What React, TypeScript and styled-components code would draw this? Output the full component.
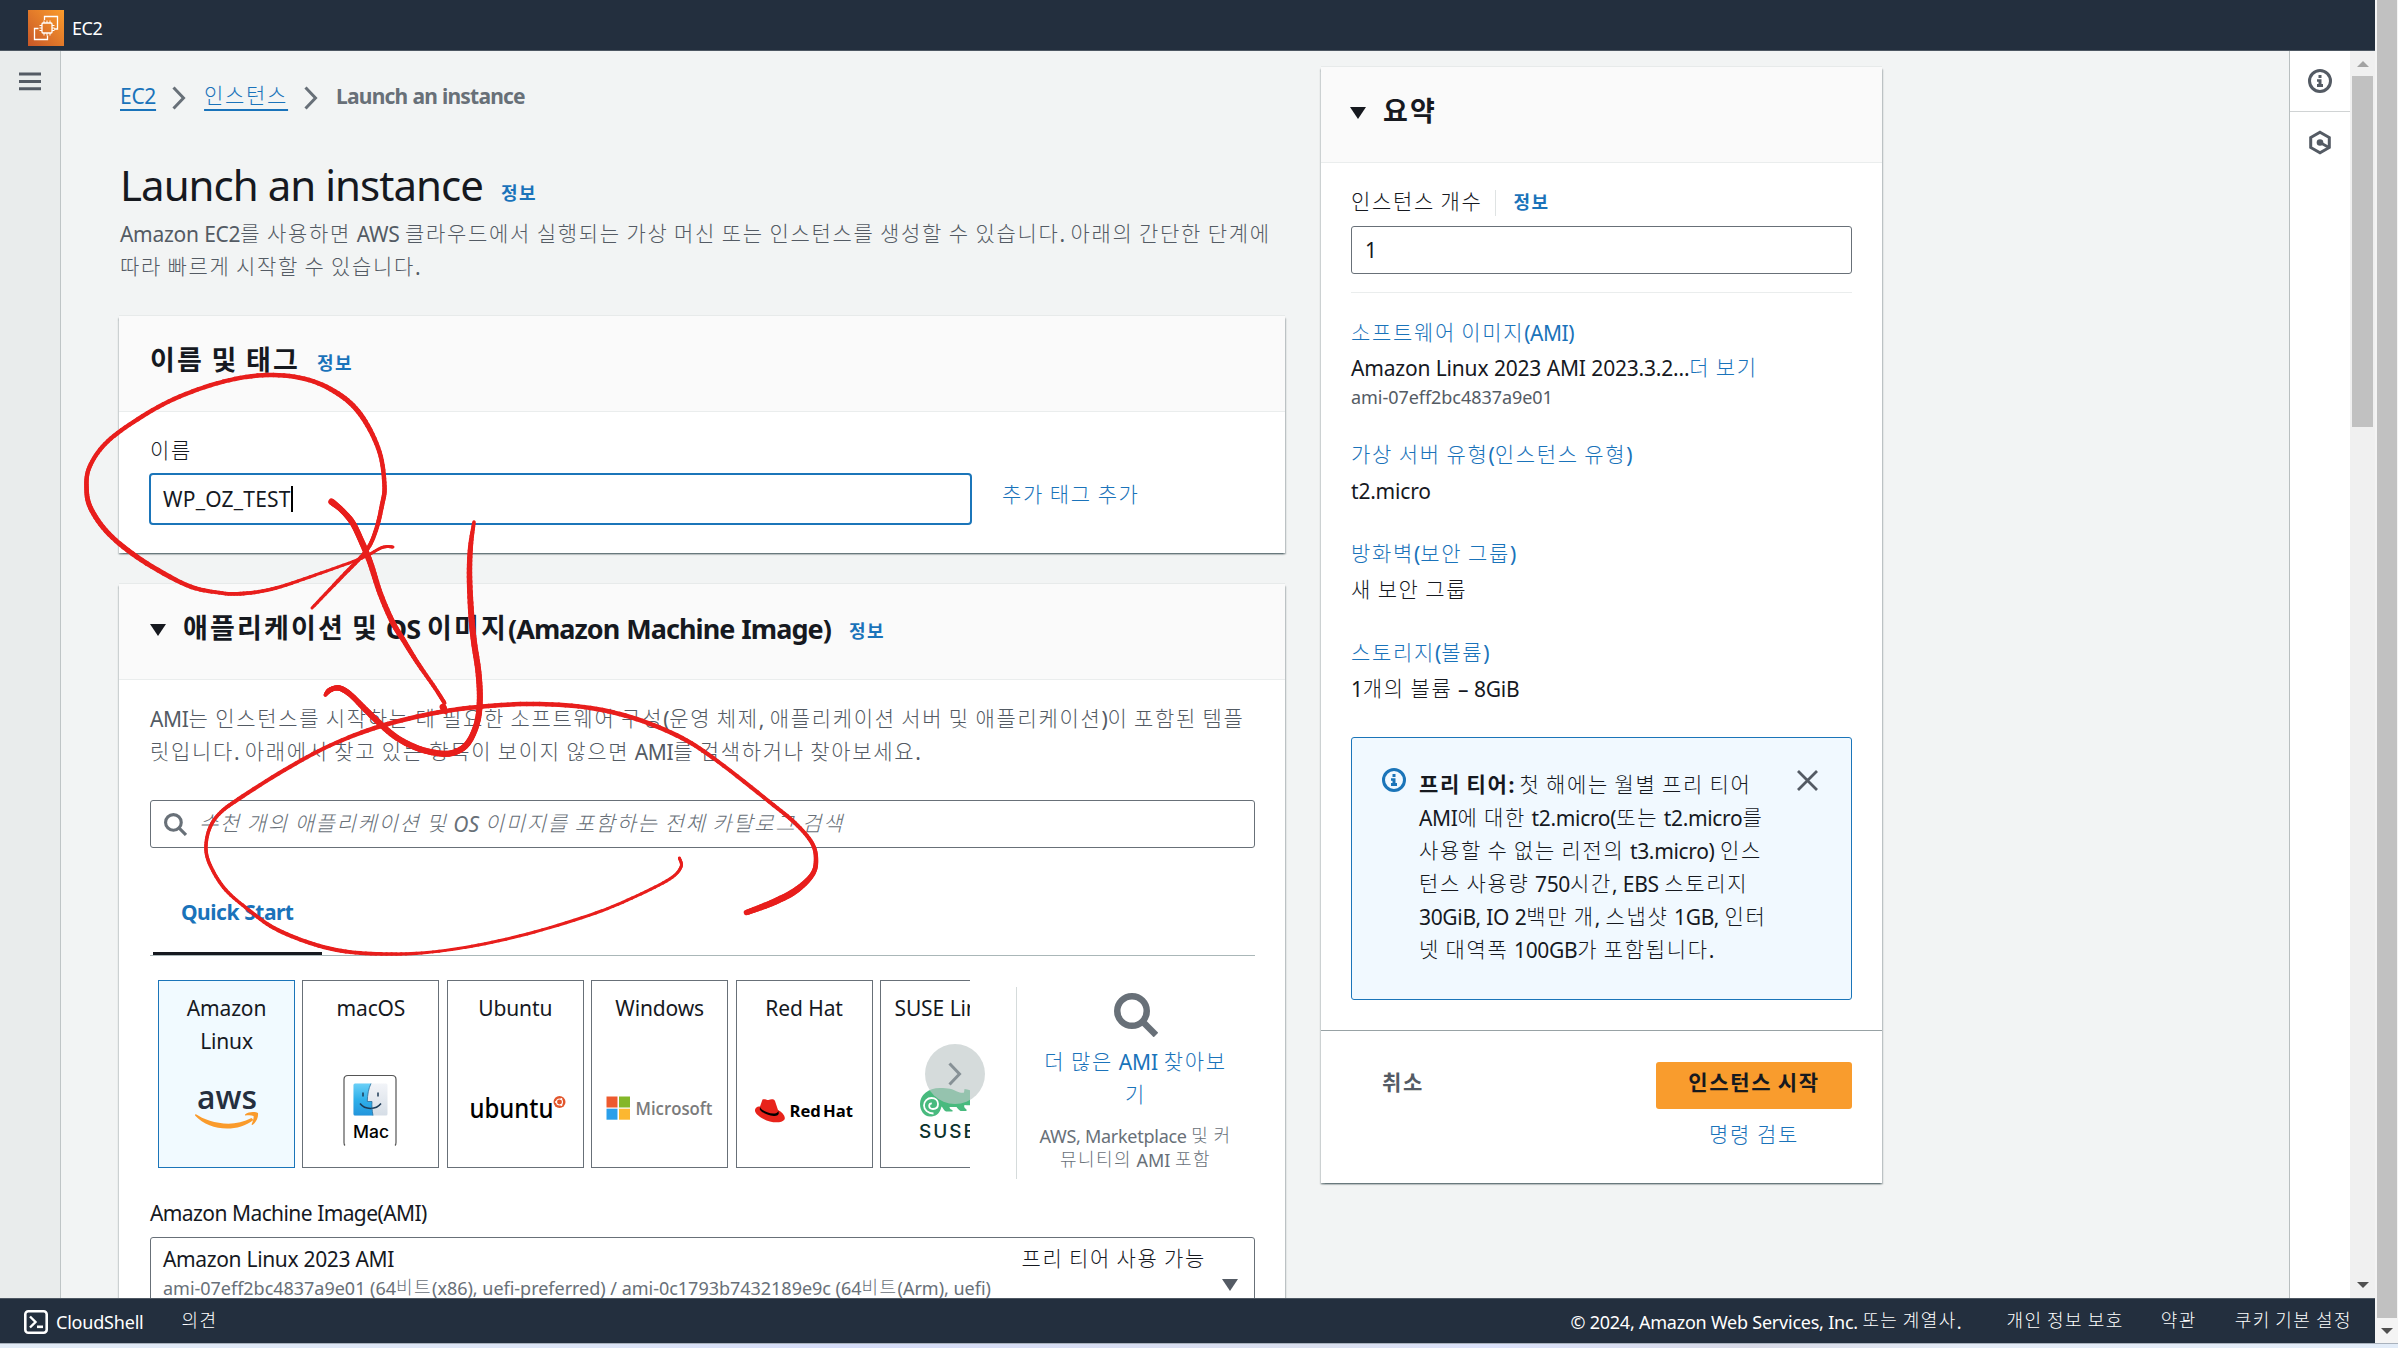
import React from 'react';
import styled, { createGlobalStyle, css } from 'styled-components';

const c = {
  ink: '#16191f',
  link: '#1a73ba',
  body: '#545b64',
  muted: '#687078',
  navy: '#232f3e',
  line: '#eaeded',
  page: '#f2f4f4',
  red: '#e81e1c',
};

const Global = createGlobalStyle`
  * { box-sizing: border-box; }
  body { margin: 0; overflow: hidden; background: ${c.page}; }
  body, input, button { font-family: 'Noto Sans', 'Noto Sans CJK KR', sans-serif; }
  svg { display: block; flex: none; }
`;

/* ---------- text ---------- */

const Hangul = styled.span<{ $bold?: boolean }>`
  font-family: 'Noto Sans CJK KR', sans-serif;
  font-weight: ${(p) => (p.$bold ? 700 : 300)};
  letter-spacing: 0.08em;
  line-height: 0;
  vertical-align: 1px;
`;

const Mixed = ({ children, bold }: { children: string; bold?: boolean }) => (
  <>
    {children.split(/([\uAC00-\uD7A3]+)/).map((run, i) =>
      i % 2 ? (
        <Hangul key={i} $bold={bold}>
          {run}
        </Hangul>
      ) : (
        run
      ),
    )}
  </>
);

type TextProps = { $color?: string; $size?: number; $lh?: number; $ls?: number; $ws?: number; $bold?: boolean; $mt?: number };

const textStyle = css<TextProps>`
  color: ${(p) => p.$color ?? c.ink};
  font-size: ${(p) => p.$size ?? 21}px;
  line-height: ${(p) => p.$lh ?? 33}px;
  letter-spacing: ${(p) => p.$ls ?? ((p.$size ?? 21) < 21 ? -0.05 : -0.33)}px;
  word-spacing: ${(p) => p.$ws ?? ((p.$size ?? 21) === 21 ? 0.35 : 0)}px;
  font-weight: ${(p) => (p.$bold ? 700 : 400)};
  margin: ${(p) => p.$mt ?? 0}px 0 0;
  white-space: nowrap;
`;
const Line = styled.div<TextProps>`${textStyle}`;
const Text = styled.span<TextProps>`${textStyle}`;

const InfoLink = styled.a<{ $gap?: number }>`
  color: ${c.link};
  font-size: 18px;
  line-height: 24px;
  margin-left: ${(p) => p.$gap ?? 18}px;
  white-space: nowrap;
`;
const Info = ({ gap }: { gap?: number }) => (
  <InfoLink $gap={gap}>
    <Mixed bold>정보</Mixed>
  </InfoLink>
);

/* ---------- shell ---------- */

const Screen = styled.div`
  width: 2398px;
  height: 1348px;
  display: grid;
  grid-template: 1343px 5px / 2375px 23px;
  position: relative;
  overflow: hidden;
`;
const Console = styled.div`
  display: flex;
  flex-direction: column;
  min-width: 0;
  min-height: 0;
`;
const TopBar = styled.header`
  flex: none;
  height: 51px;
  padding: 0 0 0 28px;
  display: flex;
  align-items: center;
  gap: 8px;
  background: ${c.navy};
  border-bottom: 1px solid #4d5762;
`;
const Service = styled.div`
  display: flex;
  gap: 8px;
  align-items: center;
  padding-top: 5px;
`;
const Body = styled.div`
  flex: 1;
  display: flex;
  min-height: 0;
`;
const LeftRail = styled.nav`
  width: 61px;
  flex: none;
  padding: 21px 0 0 19px;
  background: #e9ecec;
  border-right: 1px solid #bfc5c6;
`;
const Content = styled.main`
  flex: 1;
  min-width: 0;
  display: flex;
  align-items: flex-start;
  gap: 36px;
  padding-left: 58px;
  overflow: hidden;
`;
const RightRail = styled.nav`
  width: 61px;
  flex: none;
  background: #fff;
  border-left: 1px solid #b9bfc0;
`;
const RailItem = styled.div<{ $line?: boolean }>`
  height: 61px;
  display: flex;
  align-items: center;
  justify-content: center;
  border-bottom: ${(p) => (p.$line ? '1px solid #d0d3d4' : 'none')};
`;
const InnerScroll = styled.div`
  width: 25px;
  flex: none;
  background: #f0f0f0;
  display: flex;
  flex-direction: column;
  align-items: center;
  padding: 10px 0;
`;
const InnerThumb = styled.div`
  width: 21px;
  height: 351px;
  margin-top: 9px;
  margin-bottom: auto;
  background: #c1c1c1;
`;
const Arrow = styled.i<{ $up?: boolean; $color: string }>`
  width: 0;
  height: 0;
  border: 6px solid transparent;
  border-width: ${(p) => (p.$up ? '0 6px 6px' : '6px 6px 0')};
  border-${(p) => (p.$up ? 'bottom' : 'top')}-color: ${(p) => p.$color};
`;
const OuterScroll = styled.div`
  background: #f4f4f4;
  padding-left: 2px;
`;
const OuterThumb = styled.div`
  width: 20px;
  height: 1318px;
  background: #c1c1c1;
`;
const OuterEnd = styled.div`
  width: 20px;
  display: flex;
  justify-content: center;
  padding-top: 10px;
`;
const Taskbar = styled.div`
  grid-column: 1 / 3;
  border-top: 1px solid #a9b2bd;
  background: linear-gradient(90deg, #e2ebf6, #dce4f6 25%, #d5dcf8 35%, #dadfee 55%, #dbe2fb 62%, #d7d9e6 73%, #e4ebf6 82%, #e2ecf8);
`;

/* ---------- page head ---------- */

const Column = styled.div`
  width: 1166px;
  flex: none;
  padding-top: 29px;
`;
const Crumbs = styled.div`
  display: flex;
  align-items: center;
  height: 33px;
  padding-left: 1px;
`;
const Crumb = styled.a<{ $ls?: number }>`
  color: ${c.link};
  font-size: 21px;
  line-height: 33px;
  letter-spacing: ${(p) => p.$ls ?? 0}px;
  text-decoration: underline 2px;
  text-underline-offset: 5px;
`;
const Sep = styled.span`
  display: flex;
  padding: 3px 18px 0 16px;
`;
const TitleRow = styled.div`
  display: flex;
  align-items: baseline;
  padding-left: 1px;
  margin-top: 45px;
`;
const Intro = styled.div`
  padding-left: 1px;
  margin: 6px 0 32px;
`;

/* ---------- cards ---------- */

const Card = styled.section<{ $h?: number; $mt?: number }>`
  background: #fff;
  height: ${(p) => (p.$h ? `${p.$h}px` : 'auto')};
  margin-top: ${(p) => p.$mt ?? 0}px;
  box-shadow: 0 -1px 0 #e7eaea, 0 1.5px 1.5px rgba(0, 28, 36, 0.4), 1.5px 1.5px 1.5px rgba(0, 28, 36, 0.15),
    -1.5px 1.5px 1.5px rgba(0, 28, 36, 0.15);
`;
const CardHead = styled.div<{ $pl?: number }>`
  height: 96px;
  padding: 28px 30px 0 ${(p) => p.$pl ?? 31}px;
  display: flex;
  align-items: baseline;
  background: #fafafa;
  border-bottom: 1px solid ${c.line};
`;
const Caret = styled.i<{ $color?: string }>`
  width: 0;
  height: 0;
  border: solid transparent;
  border-width: 12px 8px 0;
  border-top-color: ${(p) => p.$color ?? c.ink};
  margin-right: 17px;
  transform: translateY(-3px);
`;
const CardBody = styled.div<{ $pl?: number }>`
  padding: 23px 30px 0 ${(p) => p.$pl ?? 31}px;
`;
const NameRow = styled.div`
  display: flex;
  gap: 30px;
`;
const NameField = styled.div`
  width: 823px;
  margin-left: -1px;
`;
const NameLabel = styled(Line)`
  padding-left: 1px;
`;
const NameInput = styled.div`
  margin-top: 5px;
  height: 52px;
  border: 2.5px solid #1b75b9;
  border-radius: 4px;
  padding: 0 0 0 12px;
  display: flex;
  align-items: center;
`;
const TextCursor = styled.i`
  width: 2px;
  height: 26px;
  background: #000;
`;
const Box = styled.div<{ $mt: number }>`
  margin-top: ${(p) => p.$mt}px;
  height: 48px;
  border: 1px solid ${c.muted};
  border-radius: 3px;
  padding-left: 13px;
  display: flex;
  align-items: center;
`;
const Placeholder = styled(Text)`
  font-style: italic;
  margin-left: 12px;
`;
const Tabs = styled.div`
  height: 108px;
  border-bottom: 1px solid #aab7b8;
  padding: 48px 0 0 3px;
`;
const Tab = styled.div`
  width: 169px;
  height: 59px;
  padding-left: 28px;
  border-bottom: 3px solid ${c.ink};
`;
const Picker = styled.div`
  display: flex;
  height: 188px;
  margin: 24px 0 29px;
  padding-left: 8px;
  position: relative;
`;
const Tiles = styled.div`
  width: 812px;
  display: flex;
  gap: 7.4px;
  overflow: hidden;
`;
const Tile = styled.div<{ $on?: boolean }>`
  width: 137px;
  flex: none;
  border: 1px solid ${(p) => (p.$on ? '#1b75b9' : c.muted)};
  background: ${(p) => (p.$on ? '#f1faff' : '#fff')};
  display: flex;
  flex-direction: column;
  align-items: center;
  padding-top: 11px;
  text-align: center;
`;
const TileName = styled(Line)`
  height: 66px;
  white-space: pre-line;
`;
const Next = styled.div`
  position: absolute;
  left: 775px;
  top: 64px;
  width: 60px;
  height: 60px;
  border-radius: 50%;
  background: rgba(190, 199, 199, 0.65);
  display: flex;
  align-items: center;
  justify-content: center;
`;
const More = styled.div`
  margin: 7px 0 0 46px;
  width: 238px;
  height: 192px;
  border-left: 1px solid #d5dbdb;
  display: flex;
  flex-direction: column;
  align-items: center;
  text-align: center;
  padding-top: 6px;
`;
const Select = styled.div`
  margin-top: 7px;
  height: 90px;
  border: 1px solid ${c.muted};
  border-radius: 3px;
  padding: 5px 16px 0 12px;
  display: flex;
`;
const SelectMain = styled.div`
  flex: 1;
`;
const SelectCaret = styled.div`
  padding-top: 39px;
  margin-left: 16px;
  width: 16px;
`;

/* ---------- summary ---------- */

const Aside = styled.aside`
  width: 561px;
  flex: none;
  margin-top: 16px;
`;
const LabelRow = styled.div`
  display: flex;
  align-items: center;
`;
const Bar = styled.i`
  width: 1px;
  height: 26px;
  margin-left: 13px;
  background: #dfe3e3;
`;
const Rule = styled.div`
  height: 1px;
  margin: 18px 0 24px;
  background: ${c.line};
`;
const Fact = styled.div`
  margin-bottom: 30px;
`;
const Alert = styled.div`
  height: 263px;
  margin: 31px 0 30px;
  border: 1px solid #1b75b9;
  border-radius: 3px;
  background: #f1f9ff;
  padding: 30px 33px 0 30px;
  display: flex;
`;
const AlertText = styled.div`
  flex: 1;
  margin: 1px 0 0 13px;
`;
const AlertClose = styled.div`
  padding-top: 2px;
`;
const Actions = styled.div`
  height: 153px;
  padding: 31px 30px 0 61px;
  display: flex;
  justify-content: space-between;
  border-top: 1px solid #98a2a5;
`;
const ActionColumn = styled.div`
  display: flex;
  flex-direction: column;
  align-items: center;
`;
const Primary = styled.button`
  width: 196px;
  height: 47px;
  border: 0;
  border-radius: 3px;
  background: #f99c2d;
  font-size: 21px;
  line-height: 33px;
  color: ${c.ink};
  padding: 0 0 4px;
`;

/* ---------- footer ---------- */

const Footer = styled.footer`
  flex: none;
  height: 45px;
  background: ${c.navy};
  border-top: 1px solid #4d5762;
  display: flex;
  align-items: center;
  padding: 1px 23px 0 24px;
`;
const FooterItem = styled(Text)<{ $gap?: number }>`
  margin-left: ${(p) => p.$gap ?? 38}px;
  ${Hangul} {
    vertical-align: 2px;
  }
`;
const Push = styled.div`
  margin-left: auto;
  display: flex;
`;

/* ---------- icons ---------- */

const Ec2Icon = () => (
  <svg width="36" height="36" viewBox="0 0 36 36">
    <defs>
      <linearGradient id="ec2" x1="0" y1="1" x2="1" y2="0">
        <stop offset="0" stopColor="#c85728" />
        <stop offset="1" stopColor="#fb9c2c" />
      </linearGradient>
    </defs>
    <rect width="36" height="36" fill="url(#ec2)" />
    <g fill="none" stroke="#fff" strokeWidth="1.3">
      <path d="M16.5 10V6.5h13V19h-3.5M10.500 18.500H6.500V29.500H19.500V25.500" />
      <rect x="14" y="13" width="10" height="10" rx="1" />
      <path d="M16 10.500v2.500M19 10.500v2.500M22 10.500v2.500M16 23v2.500M19 23v2.500M22 23v2.500M11.500 15.500h2.500M11.500 18h2.500M11.500 20.500h2.500M24 15.500h2.500M24 18h2.500M24 20.500h2.500" strokeWidth="1" />
    </g>
  </svg>
);

const Menu = () => (
  <svg width="22" height="20" viewBox="0 0 22 20" fill={c.body}>
    <path d="M0 .5h22v3H0zM0 8h22v3H0zM0 15.200h22v3H0z" />
  </svg>
);

const Chevron = ({ color = c.muted }: { color?: string }) => (
  <svg width="14" height="24" viewBox="0 0 14 24" fill="none" stroke={color} strokeWidth="3">
    <path d="M1.500 1.500L11.500 12 1.500 22.500" />
  </svg>
);

const InfoIcon = ({ color }: { color: string }) => (
  <svg width="24" height="24" viewBox="0 0 24 24">
    <circle cx="12" cy="12" r="10.500" fill="none" stroke={color} strokeWidth="3" />
    <path d="M10.500 6h3v3h-3zM9 10.200h4.500v4.800H15v3H9v-3h1.500v-2.200H9z" fill={color} />
  </svg>
);

const HexIcon = () => (
  <svg width="24" height="26" viewBox="0 0 24 26" fill="none" stroke={c.body} strokeWidth="3">
    <path d="M12 2.200l9.300 5.300v10L12 22.800 2.700 17.500v-10z" />
    <circle cx="12" cy="12.500" r="3.300" fill={c.body} stroke="none" />
    <path d="M12 12.500l9 5" strokeWidth="2.600" />
  </svg>
);

const SearchIcon = ({ size, sw }: { size: number; sw: number }) => (
  <svg width={size} height={size} viewBox="0 0 44 44" fill="none" stroke={c.muted} strokeWidth={sw}>
    <circle cx="18" cy="18" r={18 - sw / 2} />
    <path d="M29 29l13 13" />
  </svg>
);

const CloseIcon = () => (
  <svg width="21" height="21" viewBox="0 0 21 21" stroke={c.body} strokeWidth="2.800">
    <path d="M1 1l19 19M20 1L1 20" />
  </svg>
);

const ShellIcon = () => (
  <svg width="24" height="24" viewBox="0 0 24 24" fill="none" stroke="#fff">
    <rect x="1.300" y="1.300" width="21.400" height="21.400" rx="3" strokeWidth="2.600" />
    <path d="M6 6.500l5.500 5.500L6 17.500" strokeWidth="2.400" />
    <path d="M13 16.800h6" strokeWidth="2.600" />
  </svg>
);

/* logos share a 135 x 111 canvas that fills the lower part of a tile */
const Logo = ({ children }: { children: React.ReactNode }) => (
  <svg width="135" height="111" viewBox="0 0 135 111" fontFamily="'Noto Sans', sans-serif">
    {children}
  </svg>
);

const AwsLogo = () => (
  <Logo>
    <text x="38" y="50.500" fontSize="32" fontWeight="600" fontFamily="'Open Sans', sans-serif" textLength="60" lengthAdjust="spacingAndGlyphs" fill="#252f3e">aws</text>
    <path d="M36.500 56c12 8 36 15 56 4l2 2c-17 13-44 11-58.500-4.500z" fill="#fa9b2c" />
    <path d="M86 56.500c4-3 9.500-3 13-1.500.5 4-1.500 9-5.500 12l-1-.5c1.500-3 2.500-7 2-8.500-2-1-5-.8-8.500-.5z" fill="#fa9b2c" />
  </Logo>
);

const MacLogo = () => (
  <Logo>
    <defs>
      <linearGradient id="face" x1="0" y1="0" x2="0" y2="1">
        <stop offset="0" stopColor="#6bd0f7" />
        <stop offset=".5" stopColor="#2fb0ea" />
        <stop offset="1" stopColor="#2395dc" />
      </linearGradient>
      <linearGradient id="side" x1="0" y1="0" x2="0" y2="1">
        <stop offset="0" stopColor="#f2f4f8" />
        <stop offset="1" stopColor="#d5dde6" />
      </linearGradient>
    </defs>
    <path d="M42 89.500c-.8-.6-1-1.500-1-3v-63c0-3 1-4 4-4h44c3 0 4 1 4 4v63c0 1.500-.2 2.400-1 3" fill="none" stroke="#555" strokeWidth="1.200" />
    <rect x="50.500" y="27.500" width="34" height="32" rx="1.500" fill="url(#side)" />
    <path d="M68 27.500c-2.500 5-3.500 11-3.700 18h4.700c-.3 4 0 9 1 14H52a1.500 1.500 0 0 1-1.500-1.500v-29a1.500 1.500 0 0 1 1.500-1.500z" fill="url(#face)" />
    <path d="M60 36.500v4M75 36.500v4" stroke="#1d3a55" strokeWidth="1.500" />
    <path d="M57 47.500c5 6.500 16 6.500 21 0" fill="none" stroke="#1d3a55" strokeWidth="1.500" />
    <path d="M68 27.500c-2.500 5-3.500 11-3.700 18h4.700c-.3 4 0 9 1 14" fill="none" stroke="#2a6d9c" strokeWidth=".8" />
    <text x="50" y="81.500" fontSize="17.500" fontWeight="500" fontFamily="Inter, sans-serif" textLength="36" lengthAdjust="spacingAndGlyphs">Mac</text>
  </Logo>
);

const UbuntuLogo = () => (
  <Logo>
    <text x="21.500" y="61.500" fontSize="27" fontWeight="500" textLength="84" lengthAdjust="spacingAndGlyphs">ubuntu</text>
    <circle cx="111.500" cy="46" r="6" fill="#e2552c" />
    <circle cx="111.500" cy="46" r="3" fill="none" stroke="#fff" strokeWidth="1.100" />
    <circle cx="108" cy="46" r="1" fill="#fff" />
    <circle cx="113.400" cy="43" r="1" fill="#fff" />
    <circle cx="113.400" cy="49" r="1" fill="#fff" />
  </Logo>
);

const MicrosoftLogo = () => (
  <Logo>
    <g transform="translate(0.500 0.500)">
      <path d="M14 40h11v11H14z" fill="#ed5a2f" />
      <path d="M26.500 40h11v11h-11z" fill="#84b729" />
      <path d="M14 52.200h11v11H14z" fill="#2a9fea" />
      <path d="M26.500 52.200h11v11h-11z" fill="#fcb731" />
      <text x="43" y="58" fontSize="18.500" fontFamily="'Open Sans', sans-serif" fontWeight="600" textLength="77" lengthAdjust="spacingAndGlyphs" fill="#7b7b7b">Microsoft</text>
    </g>
  </Logo>
);

const RedHatLogo = () => (
  <Logo>
    <g transform="translate(0.500 0)">
      <path d="M25 43.500c2-1 4 .6 6 .4 2.200-.5 5-1.300 6.500 1l3 9c4 2 8 6.500 6.500 9.500-3 4.500-14 3.500-21-.5-6-3-10-7-8-10.500 1-1.500 3-1.800 4.500-1.800z" fill="#e8231b" />
      <path d="M22.500 51c1.500 4 11.500 8 16.500 6 1.500-.6 1.800-1.800 1.500-3l.8 3c.3 2-2 3.200-5 3-6-.4-13-4-14-6.500z" fill="#000" />
      <text x="52" y="61" fontSize="15.500" fontWeight="700" fontFamily="'Open Sans', sans-serif" textLength="63.500" lengthAdjust="spacingAndGlyphs" wordSpacing="-2">Red Hat</text>
    </g>
  </Logo>
);

const SuseLogo = () => (
  <Logo>
    <path d="M39 48c0-9 8-16 20-16 8 0 13 1 17 3.500 3 1.500 6 1.500 7 1l.5-3.500c7 1 13 4 14 6.500s1 6-1 8-9 2-13 1.500c-1 2 .5 3.500 2 4.500v1.500h-6c-2-1-3-3-4-4h-7c0 2 2 3 3 3v1.500h-6.500c-2.500-1-3-4-4.500-5-2 8-6 10-11.500 10C43 60.500 39 54.500 39 48z" fill="#48ba7e" />
    <path d="M52.500 57.500c-5.500 0-9.500-3.500-9.500-8s3.500-7.500 7.500-7.500 6.500 2.500 6.500 6-2.500 5-5 5-3.800-1.500-3.800-3.200 1.300-2.500 2.600-2.500" fill="none" stroke="#fff" strokeWidth="1.800" />
    <text x="38" y="82" fontSize="19" fontWeight="500" fontFamily="Inter, sans-serif" textLength="56" fill="#0c322c">SUSE</text>
  </Logo>
);

/* ---------- pen marks ---------- */

type P = [number, number, number];

const strokes: P[][] = [
  [[312, 608, 3], [341.600, 577, 3.800], [366, 551, 4], [376, 530, 4.300], [382, 505, 4.500], [384.500, 486, 4.500], [379.500, 452, 4.500], [363, 418, 5], [341.600, 396, 5], [309, 380, 4.500], [268, 375, 4.500], [223, 381.700, 4.300], [174, 399, 4.300], [133.500, 422, 4.300], [105, 444, 4.300], [89.500, 467, 4.300], [86.500, 487, 4.600], [90.600, 508, 5], [109, 534, 5], [141.600, 560, 5], [186.500, 585, 4.500], [219, 592.700, 3.800], [243.700, 593.500, 3.800], [276, 588, 3.500], [321, 573, 3], [362, 558, 3], [382, 547.500, 3], [393, 547, 3]],
  [[331.500, 501.700, 6.500], [341.600, 510, 5.500], [352, 522, 6], [360, 538, 6], [370, 562, 6], [380.400, 594, 5.500], [393, 623, 5.500], [404, 641, 5], [417, 662, 4.500], [435, 688, 4], [444.500, 703, 4]],
  [[443, 707, 7], [446, 713, 2.500]],
  [[474, 522, 3.500], [470.500, 547, 5], [469.500, 577, 5.500], [471.400, 617, 6], [474, 642, 6], [478.400, 672, 6], [479.800, 700, 6], [477, 723, 6], [468, 743, 6], [455.400, 752, 6], [440, 753.500, 6], [417, 748, 6], [394, 735.700, 6], [371, 715, 6], [352, 696, 5.500], [342, 689, 5.500], [335.500, 688, 5], [329, 690.700, 5], [325.300, 695, 3.500]],
  [[679.400, 858, 3], [681, 867, 3], [669.700, 879, 3], [636.500, 896, 3], [595.700, 913, 3], [534.500, 932, 3], [478.400, 945, 3], [427, 952.500, 3], [386.500, 954, 3.500], [345.700, 951.500, 4], [310, 943, 4], [274, 928, 4], [248.800, 910, 3.500], [225.800, 890, 3.500], [211.500, 868, 3.500], [206, 850, 3.500], [209, 830, 3.500], [219, 814, 3.500], [238.600, 799, 4], [284.500, 770, 4], [330, 745.500, 4], [381, 726, 4.500], [437.600, 712.500, 4.500], [488.600, 706, 4.500], [539.600, 704, 4.500], [590.600, 708, 4.500], [636.500, 719, 4.500], [682, 738, 4.500], [718, 761.500, 4], [769, 801.500, 4], [795, 823, 4], [812, 843, 4], [816, 860, 4.500], [812, 875, 5], [795, 891, 6.500], [771.700, 903, 6.500], [746.500, 912.500, 5.500]],
];

const spline = (a: number, b: number, d: number, e: number, t: number) =>
  0.5 * (2 * b + (d - a) * t + (2 * a - 5 * b + 4 * d - e) * t * t + (3 * b - a - 3 * d + e) * t * t * t);

function smooth(pts: P[]) {
  const dense: P[] = [];
  const at = (i: number) => pts[Math.max(0, Math.min(pts.length - 1, i))];
  for (let i = 0; i < pts.length - 1; i++)
    for (let t = 0; t < 1; t += 0.125)
      dense.push([0, 1, 2].map((k) => spline(at(i - 1)[k], at(i)[k], at(i + 1)[k], at(i + 2)[k], t)) as P);
  dense.push(pts[pts.length - 1]);
  return dense;
}

const Ink = styled.svg`
  position: absolute;
  left: 0;
  top: 0;
  pointer-events: none;
`;

const PenMarks = () => (
  <Ink width="900" height="1000" stroke={c.red} strokeLinecap="round">
    {strokes.map((s, i) => {
      const d = smooth(s);
      return (
        <g key={i}>
          {d.slice(1).map((p, j) => (
            <line key={j} x1={d[j][0]} y1={d[j][1]} x2={p[0]} y2={p[1]} strokeWidth={(d[j][2] + p[2]) / 2} />
          ))}
        </g>
      );
    })}
  </Ink>
);

/* ---------- data ---------- */

const images = [
  { name: 'Amazon\nLinux', logo: <AwsLogo /> },
  { name: 'macOS', logo: <MacLogo /> },
  { name: 'Ubuntu', logo: <UbuntuLogo /> },
  { name: 'Windows', logo: <MicrosoftLogo /> },
  { name: 'Red Hat', logo: <RedHatLogo /> },
  { name: 'SUSE Linux', logo: <SuseLogo /> },
];

const facts = [
  { label: '가상 서버 유형(인스턴스 유형)', value: 't2.micro' },
  { label: '방화벽(보안 그룹)', value: '새 보안 그룹' },
  { label: '스토리지(볼륨)', value: '1개의 볼륨 – 8GiB' },
];

const alertLines = [
  'AMI에 대한 t2.micro(또는 t2.micro를',
  '사용할 수 없는 리전의 t3.micro) 인스',
  '턴스 사용량 750시간, EBS 스토리지',
  '30GiB, IO 2백만 개, 스냅샷 1GB, 인터',
  '넷 대역폭 100GB가 포함됩니다.',
];

export default function App() {
  return (
    <Screen>
      <Global />
      <Console>
        <TopBar>
          <Service>
            <Ec2Icon />
            <Text $size={18} $lh={24} $ls={-0.4} $color="#fff">EC2</Text>
          </Service>
        </TopBar>
        <Body>
          <LeftRail>
            <Menu />
          </LeftRail>
          <Content>
            <Column>
              <Crumbs>
                <Crumb $ls={-0.3}>EC2</Crumb>
                <Sep><Chevron /></Sep>
                <Crumb><Mixed>인스턴스</Mixed></Crumb>
                <Sep><Chevron /></Sep>
                <Text $color={c.muted} $ls={-0.8} $bold>Launch an instance</Text>
              </Crumbs>
              <TitleRow>
                <Text $size={42} $lh={54} $ls={-0.97}>Launch an instance</Text>
                <Info />
              </TitleRow>
              <Intro>
                <Line $color={c.body} $ls={-0.3} $ws={0.5}><Mixed>Amazon EC2를 사용하면 AWS 클라우드에서 실행되는 가상 머신 또는 인스턴스를 생성할 수 있습니다. 아래의 간단한 단계에</Mixed></Line>
                <Line $color={c.body}><Mixed>따라 빠르게 시작할 수 있습니다.</Mixed></Line>
              </Intro>

              <Card $h={237}>
                <CardHead>
                  <Text $size={27} $ls={0.2} $ws={0.3}><Mixed bold>이름 및 태그</Mixed></Text>
                  <Info gap={17} />
                </CardHead>
                <CardBody>
                  <NameRow>
                    <NameField>
                      <NameLabel><Mixed>이름</Mixed></NameLabel>
                      <NameInput>
                        <Text $ls={0.2}>WP_OZ_TEST</Text>
                        <TextCursor />
                      </NameInput>
                    </NameField>
                    <Line $mt={44} $ls={0} $color={c.link}><Mixed>추가 태그 추가</Mixed></Line>
                  </NameRow>
                </CardBody>
              </Card>

              <Card $h={800} $mt={31}>
                <CardHead>
                  <Caret />
                  <Text $size={27} $ls={-0.95} $ws={0.8} $bold><Mixed bold>애플리케이션 및 OS 이미지(Amazon Machine Image)</Mixed></Text>
                  <Info />
                </CardHead>
                <CardBody>
                  <Line $color={c.body} $ws={0.45}><Mixed>AMI는 인스턴스를 시작하는 데 필요한 소프트웨어 구성(운영 체제, 애플리케이션 서버 및 애플리케이션)이 포함된 템플</Mixed></Line>
                  <Line $color={c.body}><Mixed>릿입니다. 아래에서 찾고 있는 항목이 보이지 않으면 AMI를 검색하거나 찾아보세요.</Mixed></Line>
                  <Box $mt={31}>
                    <SearchIcon size={23} sw={6} />
                    <Placeholder $ls={0} $color={c.muted}><Mixed>수천 개의 애플리케이션 및 OS 이미지를 포함하는 전체 카탈로그 검색</Mixed></Placeholder>
                  </Box>
                  <Tabs>
                    <Tab><Text $color={c.link} $ls={-0.5} $bold>Quick Start</Text></Tab>
                  </Tabs>
                  <Picker>
                    <Tiles>
                      {images.map((im, i) => (
                        <Tile key={im.name} $on={i === 0}>
                          <TileName $ls={-0.15}>{im.name}</TileName>
                          {im.logo}
                        </Tile>
                      ))}
                    </Tiles>
                    <Next><Chevron color="#879196" /></Next>
                    <More>
                      <SearchIcon size={44} sw={6.500} />
                      <Line $mt={9} $ls={-0.1} $color={c.link}><Mixed>더 많은 AMI 찾아보</Mixed></Line>
                      <Line $color={c.link}><Mixed>기</Mixed></Line>
                      <Line $mt={12} $size={18} $lh={24} $ls={-0.27} $color={c.muted}><Mixed>AWS, Marketplace 및 커</Mixed></Line>
                      <Line $size={18} $lh={24} $color={c.muted}><Mixed>뮤니티의 AMI 포함</Mixed></Line>
                    </More>
                  </Picker>
                  <Line $ls={-0.6}>Amazon Machine Image(AMI)</Line>
                  <Select>
                    <SelectMain>
                      <Line $ls={-0.38}>Amazon Linux 2023 AMI</Line>
                      <Line $size={18} $lh={24} $ls={-0.02} $color={c.muted}><Mixed>ami-07eff2bc4837a9e01 (64비트(x86), uefi-preferred) / ami-0c1793b7432189e9c (64비트(Arm), uefi)</Mixed></Line>
                    </SelectMain>
                    <Line><Mixed>프리 티어 사용 가능</Mixed></Line>
                    <SelectCaret><Caret $color={c.body} as="div" /></SelectCaret>
                  </Select>
                </CardBody>
              </Card>
            </Column>

            <Aside>
              <Card>
                <CardHead $pl={29}>
                  <Caret />
                  <Text $size={27}><Mixed bold>요약</Mixed></Text>
                </CardHead>
                <CardBody $pl={30}>
                  <LabelRow>
                    <Line><Mixed>인스턴스 개수</Mixed></Line>
                    <Bar />
                    <Info gap={17} />
                  </LabelRow>
                  <Box $mt={7}><Text>1</Text></Box>
                  <Rule />
                  <Fact>
                    <Line $color={c.link} $ls={-0.5}><Mixed>소프트웨어 이미지(AMI)</Mixed></Line>
                    <Line $mt={2} $ls={-0.2}>
                      Amazon Linux 2023 AMI 2023.3.2...
                      <Text $color={c.link}><Mixed>더 보기</Mixed></Text>
                    </Line>
                    <Line $size={18} $lh={24} $color={c.body}>ami-07eff2bc4837a9e01</Line>
                  </Fact>
                  {facts.map((f) => (
                    <Fact key={f.label}>
                      <Line $color={c.link} $ls={-0.1}><Mixed>{f.label}</Mixed></Line>
                      <Line $mt={3} $ls={-0.2}><Mixed>{f.value}</Mixed></Line>
                    </Fact>
                  ))}
                  <Alert>
                    <InfoIcon color="#1b75b9" />
                    <AlertText>
                      <Line><Text $bold><Mixed bold>프리 티어: </Mixed></Text><Mixed>첫 해에는 월별 프리 티어</Mixed></Line>
                      {alertLines.map((l) => (
                        <Line key={l}><Mixed>{l}</Mixed></Line>
                      ))}
                    </AlertText>
                    <AlertClose><CloseIcon /></AlertClose>
                  </Alert>
                </CardBody>
                <Actions>
                  <Line $mt={5} $color={c.body}><Mixed bold>취소</Mixed></Line>
                  <ActionColumn>
                    <Primary><Mixed bold>인스턴스 시작</Mixed></Primary>
                    <Line $mt={10} $ls={0.2} $color={c.link}><Mixed>명령 검토</Mixed></Line>
                  </ActionColumn>
                </Actions>
              </Card>
            </Aside>
          </Content>
          <RightRail>
            <RailItem $line><InfoIcon color={c.body} /></RailItem>
            <RailItem><HexIcon /></RailItem>
          </RightRail>
          <InnerScroll>
            <Arrow $up $color="#a3a3a3" />
            <InnerThumb />
            <Arrow $color="#505050" />
          </InnerScroll>
        </Body>
        <Footer>
          <ShellIcon />
          <FooterItem $gap={8} $size={18} $lh={24} $ls={-0.2} $color="#fff">CloudShell</FooterItem>
          <FooterItem $size={18} $lh={24} $color="#fff"><Mixed>의견</Mixed></FooterItem>
          <Push>
            <FooterItem $size={18} $lh={24} $ls={-0.23} $color="#fff"><Mixed>© 2024, Amazon Web Services, Inc. 또는 계열사.</Mixed></FooterItem>
            <FooterItem $gap={45} $size={18} $lh={24} $color="#fff"><Mixed>개인 정보 보호</Mixed></FooterItem>
            <FooterItem $gap={37} $size={18} $lh={24} $color="#fff"><Mixed>약관</Mixed></FooterItem>
            <FooterItem $gap={38} $size={18} $lh={24} $color="#fff"><Mixed>쿠키 기본 설정</Mixed></FooterItem>
          </Push>
        </Footer>
      </Console>
      <OuterScroll>
        <OuterThumb />
        <OuterEnd><Arrow $color="#505050" /></OuterEnd>
      </OuterScroll>
      <Taskbar />
      <PenMarks />
    </Screen>
  );
}
